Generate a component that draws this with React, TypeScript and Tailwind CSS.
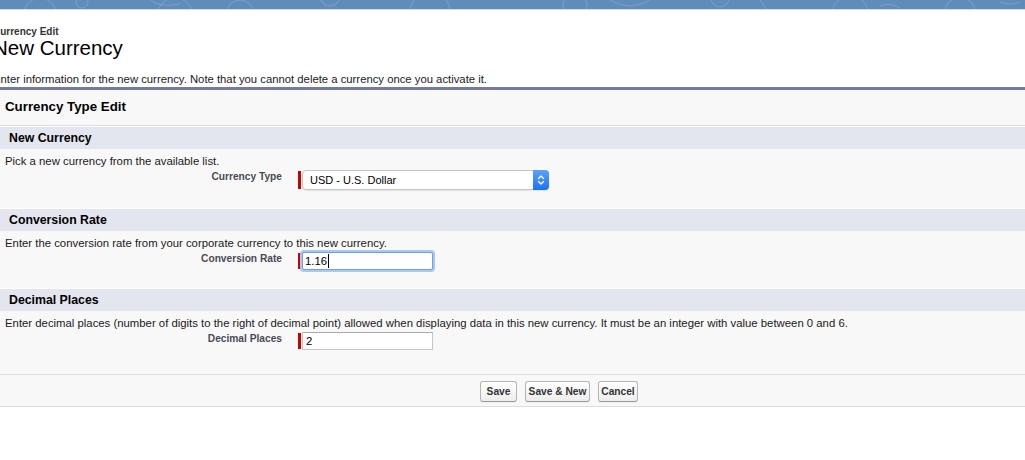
import React from "react";

function TopBand() {
  return (
    <div className="h-[10px] bg-[#5f8cbb] border-b border-[#cddcec] overflow-hidden">
      <svg width="1025" height="9" viewBox="0 0 1025 9" className="block">
        <g fill="none" stroke="#ffffff" strokeOpacity="0.18" strokeWidth="1">
          <circle cx="40" cy="14" r="16" />
          <circle cx="82" cy="2" r="6" />
          <circle cx="175" cy="16" r="18" />
          <path d="M150 0 q10 8 30 4" />
          <circle cx="240" cy="14" r="14" />
          <circle cx="330" cy="-4" r="10" />
          <circle cx="430" cy="12" r="20" />
          <circle cx="575" cy="6" r="12" />
          <path d="M610 0 q 20 12 40 0" />
          <circle cx="720" cy="-2" r="9" />
          <path d="M760 0 l 6 9" />
          <circle cx="850" cy="14" r="18" />
          <path d="M880 6 q 10 -4 20 2" />
          <circle cx="960" cy="12" r="15" />
          <path d="M1000 2 q 10 4 20 0" />
        </g>
      </svg>
    </div>
  );
}

function Section({
  title,
  desc,
  label,
  h,
  children,
}: {
  title: string;
  desc: string;
  label: string;
  h: string;
  children: React.ReactNode;
}) {
  return (
    <div>
      <div className="h-[23px] border-t border-white bg-[#e3e6ee] pl-[9px] text-[12.3px] font-bold leading-[22px] text-black">
        {title}
      </div>
      <div className={h + " pt-[6px]"}>
        <div className="pl-[5px] text-[11.35px] leading-[13px] text-[#1a1a1a] whitespace-nowrap">
          {desc}
        </div>
        <div className="mt-[2px] flex items-start">
          <div className="w-[282px] shrink-0 text-right text-[10.2px] font-bold leading-[13px] text-[#4a4a56]">
            {label}
          </div>
          <div className="ml-[16px] flex items-stretch">
            <div className="w-[3px] bg-[#c00] my-[1px]" />
            <div className="ml-[1px]">{children}</div>
          </div>
        </div>
      </div>
    </div>
  );
}

function Btn({ children, w }: { children: React.ReactNode; w: string }) {
  return (
    <button
      className={
        w +
        " h-[21px] rounded-[3px] border border-[#b5b5b5] border-b-[#9a9a9a] bg-gradient-to-b from-white to-[#ededed] text-[10.2px] font-bold text-[#333] leading-[19px] text-center shadow-[0_1px_0_rgba(0,0,0,0.04)]"
      }
    >
      {children}
    </button>
  );
}

export default function App() {
  return (
    <div className="min-h-[460px] bg-white font-['Liberation_Sans',Arial,sans-serif] overflow-hidden">
      <TopBand />
      <div className="h-[77px] -ml-[7px] whitespace-nowrap">
        <div className="pt-[16px] text-[10px] font-bold leading-[12px] text-[#333]">
          Currency Edit
        </div>
        <div className="-mt-px text-[20.5px] leading-[22px] text-black">New Currency</div>
        <div className="mt-[14px] text-[11.3px] leading-[13px] text-[#1a1a1a]">
          Enter information for the new currency. Note that you cannot delete a currency once you activate it.
        </div>
      </div>
      <div className="h-[3px] bg-[#747d95]" />
      <div className="bg-[#f8f8f8]">
        <div className="h-[36px] border-b border-[#dcdcdc] pl-[5px] pt-[9px] text-[13.3px] font-bold leading-[16px] text-black">
          Currency Type Edit
        </div>
        <Section
          title="New Currency"
          desc="Pick a new currency from the available list."
          label="Currency Type"
          h="h-[59px]"
        >
          <div className="flex h-[20px] w-[247px] items-stretch rounded-[4px] border border-[#c4c4c4] bg-white shadow-[0_1px_1px_rgba(0,0,0,0.08)]">
            <div className="flex-1 pl-[7px] text-[11px] leading-[18px] text-black">USD - U.S. Dollar</div>
            <div className="-my-px -mr-px flex w-[16px] items-center justify-center rounded-r-[4px] bg-gradient-to-b from-[#5aa2fb] to-[#1f6ff2]">
              <svg width="8" height="12" viewBox="0 0 8 12" fill="none" stroke="white" strokeWidth="1.4" strokeLinecap="round" strokeLinejoin="round">
                <path d="M1.5 4.5 L4 2 L6.5 4.5" />
                <path d="M1.5 7.5 L4 10 L6.5 7.5" />
              </svg>
            </div>
          </div>
        </Section>
        <Section
          title="Conversion Rate"
          desc="Enter the conversion rate from your corporate currency to this new currency."
          label="Conversion Rate"
          h="h-[57px]"
        >
          <div className="flex h-[18px] w-[131px] items-center rounded-[2px] border border-[#6d9ee6] bg-white pl-[2px] shadow-[0_0_0_2px_#a9c9f3] text-[11.3px] text-black">
            <span>1.16</span>
            <span className="ml-px h-[14px] w-px bg-black" />
          </div>
        </Section>
        <Section
          title="Decimal Places"
          desc="Enter decimal places (number of digits to the right of decimal point) allowed when displaying data in this new currency. It must be an integer with value between 0 and 6."
          label="Decimal Places"
          h="h-[63px]"
        >
          <div className="flex h-[18px] w-[131px] items-center border border-[#c6c6c6] border-t-[#aaaaaa] bg-white pl-[3px] text-[11.3px] text-black">
            2
          </div>
        </Section>
        <div className="h-[33px] border-y border-[#dcdcdc] pt-[6px]">
          <div className="ml-[480px] flex gap-[8px]">
            <Btn w="w-[37px]">Save</Btn>
            <Btn w="w-[65px]">Save &amp; New</Btn>
            <Btn w="w-[40px]">Cancel</Btn>
          </div>
        </div>
      </div>
    </div>
  );
}
